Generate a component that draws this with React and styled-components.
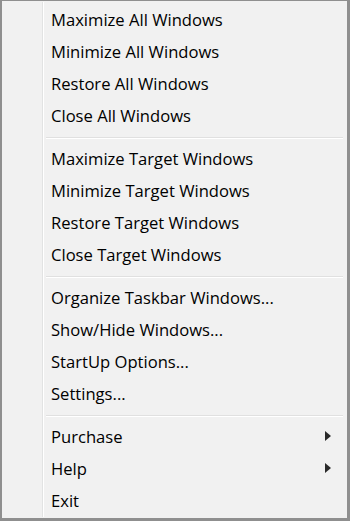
import React from "react";
import styled, { createGlobalStyle } from "styled-components";

const Global = createGlobalStyle`
  html, body { margin: 0; padding: 0; background: #f1f1f1; }
  body { width: 350px; height: 521px; overflow: hidden; }
`;

const Menu = styled.div`
  box-sizing: border-box;
  width: 350px;
  height: 521px;
  padding: 2px;
  border-style: solid;
  border-color: #8f8f8f;
  border-width: 1px 3px 3px 2px;
  background-color: #f1f1f1;
  background-image: linear-gradient(
    to right,
    transparent 40px,
    #e2e3e3 40px,
    #e2e3e3 41px,
    #ffffff 41px,
    #ffffff 42px,
    transparent 42px
  );
  background-repeat: no-repeat;
  background-position: 0 1px;
  background-size: 100% calc(100% - 2px);
  display: flex;
  flex-direction: column;
  font-family: "Open Sans", "Noto Sans", "DejaVu Sans", sans-serif;
  font-size: 16.6px;
  color: #000;
`;

const Group = styled.div`
  display: flex;
  flex-direction: column;
`;

const Item = styled.div`
  height: 32px;
  display: flex;
  align-items: center;
  justify-content: space-between;
  padding: 0 14px 0 47px;
  white-space: nowrap;
`;

const Label = styled.span`
  letter-spacing: 0;
`;

const Separator = styled.div`
  height: 1px;
  margin: 6px 2px 3px 42px;
  border-top: 1px solid #e0e0e0;
  background: #ffffff;
`;

const Arrow = () => (
  <svg width="6" height="10" viewBox="0 0 6 10">
    <polygon points="0,0 6,5 0,10" fill="#2a2a2a" />
  </svg>
);

const groups = [
  ["Maximize All Windows", "Minimize All Windows", "Restore All Windows", "Close All Windows"],
  ["Maximize Target Windows", "Minimize Target Windows", "Restore Target Windows", "Close Target Windows"],
  ["Organize Taskbar Windows...", "Show/Hide Windows...", "StartUp Options...", "Settings..."],
  [
    { label: "Purchase", sub: true },
    { label: "Help", sub: true },
    { label: "Exit" },
  ],
];

export default function App() {
  return (
    <>
      <Global />
      <Menu>
        {groups.map((g, gi) => (
          <React.Fragment key={gi}>
            {gi > 0 && <Separator />}
            <Group>
              {g.map((it) => {
                const item = typeof it === "string" ? { label: it } : it;
                return (
                  <Item key={item.label}>
                    <Label>{item.label}</Label>
                    {item.sub && <Arrow />}
                  </Item>
                );
              })}
            </Group>
          </React.Fragment>
        ))}
      </Menu>
    </>
  );
}
